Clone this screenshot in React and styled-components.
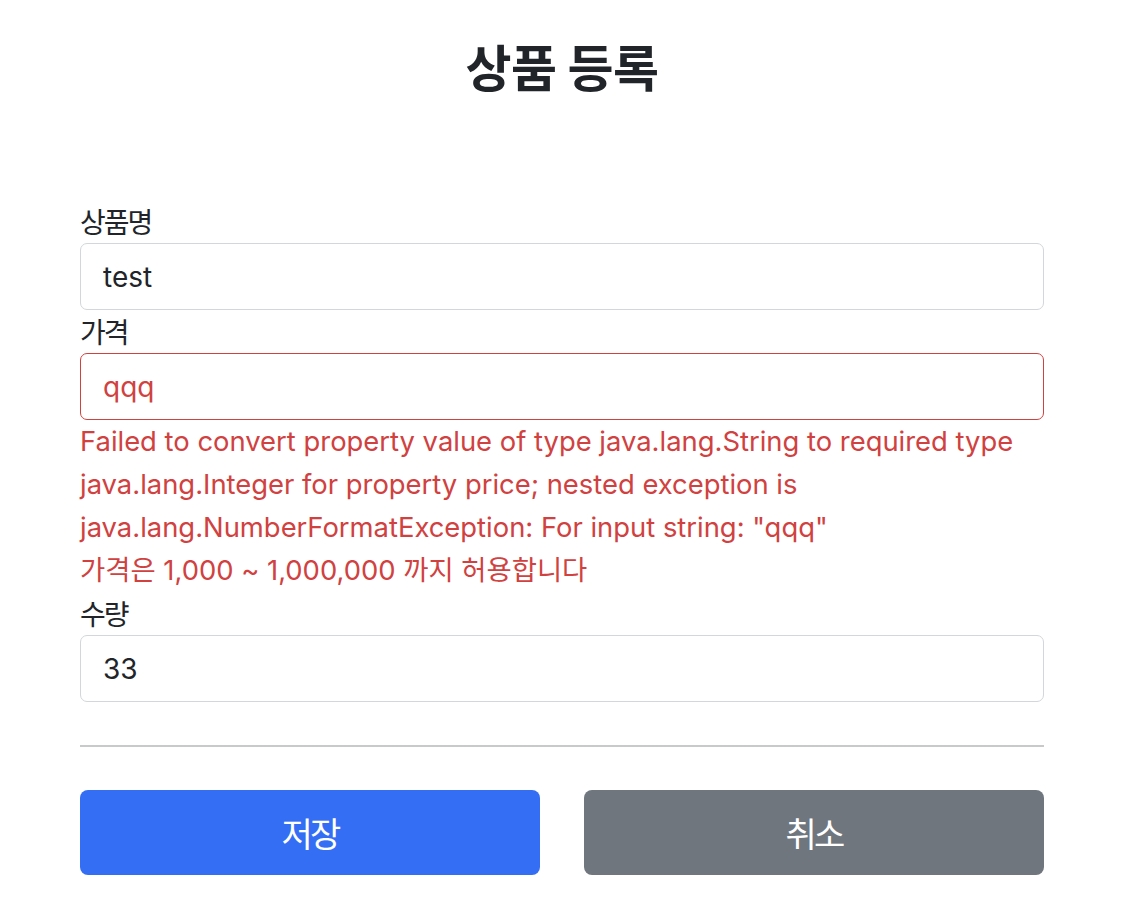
import React from "react";
import styled, { createGlobalStyle } from "styled-components";

const Global = createGlobalStyle`
  html, body { margin: 0; padding: 0; background: #ffffff; }
  body {
    font-family: Inter, "Noto Sans CJK KR", sans-serif;
    color: #212529;
    font-size: 28.5px;
    line-height: 43px;
  }
  * { box-sizing: border-box; }
`;

const Container = styled.div`
  padding: 0 100px 0 80px;
`;

const Header = styled.header`
  padding-top: 36px;
  margin-bottom: 106px;
  text-align: center;
`;

const Title = styled.h2`
  margin: 0;
  font-size: 50px;
  line-height: 58px;
  font-weight: 700;
  letter-spacing: -0.01em;
  color: #212529;
  font-family: "Noto Sans CJK KR", sans-serif;
`;

const Form = styled.form`
  display: flex;
  flex-direction: column;
`;

const Label = styled.label`
  display: block;
  font-family: "Noto Sans CJK KR", sans-serif;
  font-size: 28px;
  line-height: 43px;
  letter-spacing: -0.07em;
  color: #212529;
`;

const Input = styled.input`
  display: block;
  width: 100%;
  height: 67px;
  padding: 0 22px;
  font-family: Inter, "Noto Sans CJK KR", sans-serif;
  font-size: 28px;
  color: ${(p) => (p.$invalid ? "#d0413f" : "#212529")};
  background: #fff;
  border: 1px solid ${(p) => (p.$invalid ? "#d0413f" : "#d3d6da")};
  border-radius: 7px;
  outline: none;
`;

const ErrorText = styled.div`
  color: #d0413f;
  font-size: 27.4px;
  line-height: 43px;
`;

const Divider = styled.hr`
  margin: 43px 0;
  border: 0;
  border-top: 2px solid #c8c9cb;
`;

const ButtonRow = styled.div`
  display: grid;
  grid-template-columns: 1fr 1fr;
  gap: 44px;
`;

const Button = styled.button`
  height: 85px;
  border: none;
  border-radius: 8px;
  background: ${(p) => (p.$variant === "secondary" ? "#6f767e" : "#336ef5")};
  color: #ffffff;
  font-family: "Noto Sans CJK KR", sans-serif;
  font-size: 34px;
  letter-spacing: -0.08em;
  cursor: pointer;
`;

export default function App() {
  return (
    <>
      <Global />
      <Container>
        <Header>
          <Title>상품 등록</Title>
        </Header>
        <Form onSubmit={(e) => e.preventDefault()}>
          <Label htmlFor="itemName">상품명</Label>
          <Input id="itemName" defaultValue="test" />
          <Label htmlFor="price">가격</Label>
          <Input id="price" defaultValue="qqq" $invalid />
          <ErrorText>
            Failed to convert property value of type java.lang.String to required type
            java.lang.Integer for property price; nested exception is
            java.lang.NumberFormatException: For input string: "qqq"
          </ErrorText>
          <ErrorText>가격은 1,000 ~ 1,000,000 까지 허용합니다</ErrorText>
          <Label htmlFor="quantity">수량</Label>
          <Input id="quantity" defaultValue="33" />
          <Divider />
          <ButtonRow>
            <Button type="submit">저장</Button>
            <Button type="button" $variant="secondary">취소</Button>
          </ButtonRow>
        </Form>
      </Container>
    </>
  );
}
